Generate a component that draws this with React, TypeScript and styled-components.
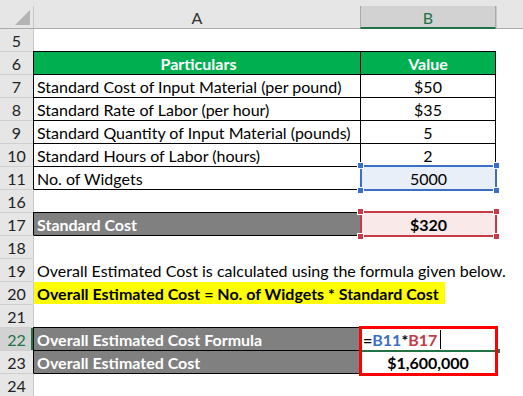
import React from 'react';
import styled, { createGlobalStyle, css } from 'styled-components';

const FONT = `Lato, "Open Sans", "Liberation Sans", sans-serif`;

const Global = createGlobalStyle`
  html, body { margin: 0; padding: 0; background: #ffffff; }
  body { font-family: ${FONT}; }
`;

const Sheet = styled.div`
  width: 523px;
  height: 396px;
  overflow: hidden;
  display: flex;
  flex-direction: column;
  background: #ffffff;
  font-size: 16px;
  color: #000;
`;

const HeaderBar = styled.div`
  position: relative;
  z-index: 1;
  height: 29px;
  margin-bottom: -1px;
  box-sizing: border-box;
  padding-top: 6px;
  background: #e6e6e6;
  border-bottom: 1px solid #ababab;
  display: flex;
`;

const Corner = styled.div`
  width: 33px;
  margin-top: -6px;
  position: relative;
  display: flex;
  align-items: flex-end;
  justify-content: flex-end;
  padding: 0 3px 3px 0;
  box-sizing: border-box;
`;

const Triangle = styled.span`
  width: 0;
  height: 0;
  border-left: 15px solid transparent;
  border-bottom: 15px solid #b4b4b4;
`;

const ColHead = styled.div<{ $w?: number; $active?: boolean }>`
  ${(p) => (p.$w ? `width: ${p.$w}px;` : 'flex: 1;')}
  box-sizing: border-box;
  border-left: 1px solid #c8c8c8;
  display: flex;
  align-items: center;
  justify-content: center;
  font-size: 16px;
  color: #333;
  ${(p) =>
    p.$active &&
    css`
      background: #d2d2d2;
      color: #217346;
      border-left-color: #ababab;
      border-right: 1px solid #ababab;
      border-bottom: 2px solid #217346;
      margin-bottom: -1px;
      padding-top: 1px;
    `}
`;

const Row = styled.div`
  display: flex;
  height: 23px;
  flex-shrink: 0;
`;

const RowNum = styled.div<{ $active?: boolean }>`
  width: 33px;
  box-sizing: border-box;
  border-top: 1px solid #cfcfcf;
  padding-top: 1px;
  background: ${(p) => (p.$active ? '#d2d2d2' : '#e6e6e6')};
  color: ${(p) => (p.$active ? '#217346' : '#222')};
  ${(p) => p.$active && 'box-shadow: inset -2px 0 0 #217346;'}
  display: flex;
  align-items: center;
  justify-content: center;
  font-size: 16px;
`;

type CellProps = {
  $boxed?: boolean;
  $top?: boolean;
  $fill?: string;
  $bold?: boolean;
  $ink?: string;
  $center?: boolean;
};

const cellBase = css<CellProps>`
  position: relative;
  box-sizing: border-box;
  display: flex;
  align-items: center;
  padding-top: 1px;
  white-space: nowrap;
  border-top: 1px solid ${(p) => (p.$top ? '#000' : 'transparent')};
  background: ${(p) => p.$fill || 'transparent'};
  color: ${(p) => p.$ink || '#000'};
  font-weight: ${(p) => (p.$bold ? 700 : 400)};
  justify-content: ${(p) => (p.$center ? 'center' : 'flex-start')};
`;

const CellA = styled.div<CellProps>`
  ${cellBase}
  width: 327px;
  padding-left: 3px;
  border-left: 1px solid ${(p) => (p.$boxed ? '#000' : '#c8c8c8')};
`;

const CellB = styled.div<CellProps>`
  ${cellBase}
  width: 136px;
  border-left: 1px solid ${(p) => (p.$boxed ? '#000' : 'transparent')};
  border-right: 1px solid ${(p) => (p.$boxed ? '#000' : 'transparent')};
  justify-content: center;
`;

const Rest = styled.div`
  flex: 1;
`;

const Mark = styled.span`
  display: inline-flex;
  align-items: center;
  align-self: stretch;
  margin: -1px 0 0 -3px;
  padding: 1px 6px 0 3px;
  background: #ffff00;
`;

const RefFrame = styled.div<{ $c: string; $bg: string }>`
  position: absolute;
  z-index: 2;
  left: -1px;
  right: -2px;
  top: -2px;
  bottom: -2px;
  padding-top: 1px;
  border: 2px solid ${(p) => p.$c};
  background: ${(p) => p.$bg};
  display: flex;
  align-items: center;
  justify-content: center;
  font-weight: inherit;
`;

const Handle = styled.span<{ $c: string; $x: 'l' | 'r'; $y: 't' | 'b' }>`
  position: absolute;
  width: 5px;
  height: 5px;
  background: ${(p) => p.$c};
  box-shadow: 0 0 0 1px #fff;
  ${(p) => (p.$x === 'l' ? 'left: -4px;' : 'right: -4px;')}
  ${(p) => (p.$y === 't' ? 'top: -4px;' : 'bottom: -4px;')}
`;

const Callout = styled.div`
  position: absolute;
  z-index: 3;
  left: -2px;
  top: -2px;
  width: 139px;
  height: 50px;
  box-sizing: border-box;
  border: 3px solid #ff0000;
  pointer-events: none;
`;

const EditLine = styled.div`
  position: absolute;
  z-index: 2;
  left: -2px;
  right: -1px;
  bottom: -2px;
  height: 2px;
  background: #217346;
  &::after {
    content: '';
    position: absolute;
    right: -4px;
    top: -1px;
    width: 4px;
    height: 4px;
    background: #217346;
  }
`;

const Formula = styled.div`
  align-self: stretch;
  flex: 1;
  display: flex;
  align-items: center;
  padding-left: 2px;
  font-weight: 700;
`;

const Ref = styled.span<{ $c: string }>`
  color: ${(p) => p.$c};
`;

const Caret = styled.span`
  display: inline-block;
  width: 1px;
  height: 19px;
  margin-left: 3px;
  background: #000;
`;

const BLUE = '#3b6fc7';
const RED = '#c53a44';

function Frame({ c, bg, children }: { c: string; bg: string; children: React.ReactNode }) {
  return (
    <RefFrame $c={c} $bg={bg}>
      {children}
      <Handle $c={c} $x="l" $y="t" />
      <Handle $c={c} $x="r" $y="t" />
      <Handle $c={c} $x="l" $y="b" />
      <Handle $c={c} $x="r" $y="b" />
    </RefFrame>
  );
}

const dataRows: [number, string, string][] = [
  [7, 'Standard Cost of Input Material (per pound)', '$50'],
  [8, 'Standard Rate of Labor (per hour)', '$35'],
  [9, 'Standard Quantity of Input Material (pounds)', '5'],
  [10, 'Standard Hours of Labor (hours)', '2'],
];

export default function App() {
  return (
    <>
      <Global />
      <Sheet>
        <HeaderBar>
          <Corner>
            <Triangle />
          </Corner>
          <ColHead $w={327}>A</ColHead>
          <ColHead $w={136} $active>
            B
          </ColHead>
          <ColHead />
        </HeaderBar>

        <Row>
          <RowNum>5</RowNum>
          <CellA />
          <CellB />
          <Rest />
        </Row>
        <Row>
          <RowNum>6</RowNum>
          <CellA $boxed $top $fill="#00b050" $ink="#fff" $bold $center>
            Particulars
          </CellA>
          <CellB $boxed $top $fill="#00b050" $ink="#fff" $bold>
            Value
          </CellB>
          <Rest />
        </Row>
        {dataRows.map(([n, a, b]) => (
          <Row key={n}>
            <RowNum>{n}</RowNum>
            <CellA $boxed $top>
              {a}
            </CellA>
            <CellB $boxed $top>
              {b}
            </CellB>
            <Rest />
          </Row>
        ))}
        <Row>
          <RowNum>11</RowNum>
          <CellA $boxed $top>
            No. of Widgets
          </CellA>
          <CellB $boxed $top>
            <Frame c={BLUE} bg="#e8eff9">
              5000
            </Frame>
          </CellB>
          <Rest />
        </Row>
        <Row>
          <RowNum>16</RowNum>
          <CellA $top />
          <CellB $top />
          <Rest />
        </Row>
        <Row>
          <RowNum>17</RowNum>
          <CellA $boxed $top $fill="#808080" $ink="#fff" $bold>
            Standard Cost
          </CellA>
          <CellB $boxed $top $bold>
            <Frame c={RED} bg="#f9e9e9">
              $320
            </Frame>
          </CellB>
          <Rest />
        </Row>
        <Row>
          <RowNum>18</RowNum>
          <CellA $top />
          <CellB $top />
          <Rest />
        </Row>
        <Row>
          <RowNum>19</RowNum>
          <CellA>Overall Estimated Cost is calculated using the formula given below.</CellA>
          <CellB />
          <Rest />
        </Row>
        <Row>
          <RowNum>20</RowNum>
          <CellA $bold>
            <Mark>Overall Estimated Cost = No. of Widgets * Standard Cost</Mark>
          </CellA>
          <CellB />
          <Rest />
        </Row>
        <Row>
          <RowNum>21</RowNum>
          <CellA />
          <CellB />
          <Rest />
        </Row>
        <Row>
          <RowNum $active>22</RowNum>
          <CellA $boxed $top $fill="#808080" $ink="#fff" $bold>
            Overall Estimated Cost Formula
          </CellA>
          <CellB $boxed $top>
            <Formula>
              =<Ref $c={BLUE}>B11</Ref>*<Ref $c={RED}>B17</Ref>
              <Caret />
            </Formula>
            <EditLine />
            <Callout />
          </CellB>
          <Rest />
        </Row>
        <Row>
          <RowNum>23</RowNum>
          <CellA $boxed $top $fill="#808080" $ink="#fff" $bold>
            Overall Estimated Cost
          </CellA>
          <CellB $boxed $top $bold>
            $1,600,000
          </CellB>
          <Rest />
        </Row>
        <Row>
          <RowNum>24</RowNum>
          <CellA $top />
          <CellB $top />
          <Rest />
        </Row>
      </Sheet>
    </>
  );
}
